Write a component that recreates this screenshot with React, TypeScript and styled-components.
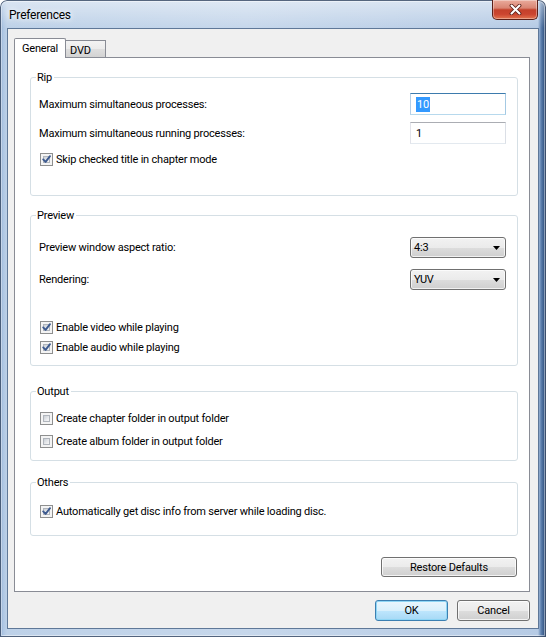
import * as React from 'react';
import styled, { createGlobalStyle, css } from 'styled-components';

const FONT = `Roboto, "Liberation Sans", sans-serif`;

const GlobalStyle = createGlobalStyle`
  html, body {
    margin: 0;
    padding: 0;
    background: #fff;
  }
  body {
    font-family: ${FONT};
    font-size: 11px;
    letter-spacing: -0.2px;
    color: #000;
  }
  * {
    box-sizing: border-box;
  }
`;

const SWindow = styled.div`
  width: 546px;
  height: 637px;
  display: flex;
  flex-direction: column;
  padding: 0 7px 8px 7px;
  border-radius: 7px 7px 0 0;
  overflow: hidden;
  background:
    linear-gradient(180deg, rgba(255, 255, 255, 0.45) 0px, rgba(255, 255, 255, 0) 28px),
    linear-gradient(90deg, #7fa3d0 0px, #aec6e3 3px, #bdd1e8 7px, #c6d7eb 45%, #b6cbe5 calc(100% - 8px), #5f82b0 calc(100% - 5px), #1e3e6c 100%);
  box-shadow: inset 0 0 0 1px rgba(35, 55, 85, 0.75), inset 0 0 0 2px rgba(255, 255, 255, 0.45);
`;

const TitleBar = styled.div`
  height: 28px;
  flex: none;
  display: flex;
  align-items: flex-start;
  justify-content: space-between;
`;

const Title = styled.span`
  margin: 8px 0 0 2px;
  font: 12px/15px ${FONT};
  color: #000;
  text-shadow: 0 0 5px #fff, 0 0 8px rgba(255, 255, 255, 0.9);
`;

const CloseButton = styled.div`
  width: 46px;
  height: 20px;
  margin-right: 1px;
  border: 1px solid #5b2019;
  border-top: none;
  border-radius: 0 0 5px 5px;
  display: flex;
  align-items: center;
  justify-content: center;
  background: linear-gradient(180deg, #eaab9c 0%, #d98573 42%, #c4412b 52%, #cb4530 75%, #e2744f 100%);
  box-shadow: inset 0 0 0 1px rgba(255, 255, 255, 0.35);
`;

const Client = styled.div`
  flex: 1;
  display: flex;
  flex-direction: column;
  background: #f0f0f0;
  border: 1px solid #5f7898;
  padding: 9px 8px 7px 6px;
`;

const TabStrip = styled.div`
  display: flex;
  align-items: flex-end;
  height: 20px;
  margin-bottom: -1px;
  position: relative;
  z-index: 1;
`;

const Tab = styled.div<{ $active?: boolean }>`
  font: 11px/14px ${FONT};
  border: 1px solid #898c95;
  border-bottom: none;
  ${({ $active }) =>
    $active
      ? css`
          position: relative;
          z-index: 2;
          height: 20px;
          padding: 3px 7px 0 7px;
          background: #fff;
          border-radius: 2px 2px 0 0;
        `
      : css`
          height: 17px;
          margin: 0 0 1px -1px;
          padding: 3px 14px 0 4px;
          background: linear-gradient(180deg, #f3f3f3 0%, #ebebeb 50%, #dedede 51%, #d3d3d3 100%);
        `}
`;

const Panel = styled.div`
  height: 535px;
  flex: none;
  background: #fff;
  border: 1px solid #898c95;
  padding: 12px 11px 0 15px;
  display: flex;
  flex-direction: column;
`;

const Group = styled.fieldset<{ $height: number; $top: number }>`
  margin: ${({ $top }) => $top}px 0 0 0;
  height: ${({ $height }) => $height}px;
  padding: 0;
  border: 1px solid #d5dfe5;
  border-radius: 3px;
  min-inline-size: 0;
`;

const Legend = styled.legend`
  margin-left: 5px;
  padding: 0 2px 0 1px;
  font: 11px/15px ${FONT};
  color: #000;
`;

const GroupBody = styled.div<{ $padTop: number }>`
  display: flex;
  flex-direction: column;
  padding: ${({ $padTop }) => $padTop}px 11px 0 8px;
`;

const FieldRow = styled.div<{ $height: number; $top?: number }>`
  display: flex;
  align-items: center;
  justify-content: space-between;
  height: ${({ $height }) => $height}px;
  margin-top: ${({ $top }) => $top ?? 0}px;
  font: 11px/15px ${FONT};
`;

const TextBox = styled.div<{ $focused?: boolean }>`
  width: 96px;
  height: 22px;
  display: flex;
  align-items: center;
  padding-left: 5px;
  background: #fff;
  border: 1px solid;
  border-color: ${({ $focused }) =>
    $focused ? '#3d7bad #a4c9e3 #b7d9ed #b5cfe7' : '#abadb3 #dbdfe6 #e3e9ef #e2e3ea'};
  font: 11px/15px ${FONT};
`;

const Selected = styled.span`
  background: #3399ff;
  color: #fff;
  padding: 0 1px;
`;

const DropDown = styled.div`
  width: 96px;
  height: 21px;
  display: flex;
  align-items: center;
  justify-content: space-between;
  padding: 0 5px 0 3px;
  border: 1px solid #707070;
  border-radius: 3px;
  background: linear-gradient(180deg, #f2f2f2 0%, #ebebeb 50%, #dddddd 51%, #cfcfcf 100%);
  box-shadow: inset 0 0 0 1px rgba(255, 255, 255, 0.7);
  font: 11px/15px ${FONT};
`;

const CheckRow = styled.label<{ $top?: number }>`
  display: flex;
  align-items: center;
  gap: 3px;
  height: 15px;
  margin-top: ${({ $top }) => $top ?? 0}px;
  padding-left: 1px;
  font: 11px/15px ${FONT};
`;

const CheckBox = styled.span`
  width: 13px;
  height: 13px;
  flex: none;
  display: grid;
  padding: 2px;
  border: 1px solid #8e8f8f;
  background: #f4f4f4;
  & > * {
    grid-area: 1 / 1;
  }
`;

const CheckInner = styled.span`
  border: 1px solid #b0b5bc;
  background: linear-gradient(135deg, #c9ced4 0%, #e6e8eb 55%, #f7f7f7 100%);
`;

const CheckMark = styled.svg`
  margin: -2px;
  width: 11px;
  height: 11px;
`;

const RestoreRow = styled.div`
  display: flex;
  justify-content: flex-end;
  margin: 21px 1px 0 0;
`;

const Button = styled.div<{ $width: number; $height: number; $default?: boolean }>`
  width: ${({ $width }) => $width}px;
  height: ${({ $height }) => $height}px;
  display: flex;
  align-items: center;
  justify-content: center;
  border-radius: 3px;
  font: 11px/15px ${FONT};
  color: #000;
  ${({ $default }) =>
    $default
      ? css`
          border: 1px solid #3c7fb1;
          background: linear-gradient(180deg, #eaf6fd 0%, #d9f0fc 50%, #bee6fd 51%, #a7d9f5 100%);
          box-shadow: inset 0 0 0 1px #8fd6f5;
        `
      : css`
          border: 1px solid #707070;
          background: linear-gradient(180deg, #f2f2f2 0%, #ebebeb 50%, #dddddd 51%, #cfcfcf 100%);
          box-shadow: inset 0 0 0 1px rgba(255, 255, 255, 0.75);
        `}
`;

const ButtonRow = styled.div`
  display: flex;
  justify-content: flex-end;
  gap: 9px;
  margin-top: 8px;
`;

const Check = ({ checked, label, top }: { checked?: boolean; label: string; top?: number }) => (
  <CheckRow $top={top}>
    <CheckBox>
      <CheckInner />
      {checked && (
        <CheckMark viewBox="0 0 11 11">
          <path d="M2.2 5.4 L4.6 7.9 L9 2.2" fill="none" stroke="#3d5a8f" strokeWidth="1.9" strokeLinecap="round" strokeLinejoin="round" />
        </CheckMark>
      )}
    </CheckBox>
    <span>{label}</span>
  </CheckRow>
);

const Arrow = () => (
  <svg width="7" height="4" viewBox="0 0 7 4">
    <path d="M0 0 H7 L3.5 4 Z" fill="#000" />
  </svg>
);

const App = () => (
  <>
    <GlobalStyle />
    <SWindow>
      <TitleBar>
        <Title>Preferences</Title>
        <CloseButton>
          <svg width="13" height="11" viewBox="0 0 13 11">
            <path d="M2.5 1.5 L10.5 9.5 M10.5 1.5 L2.5 9.5" stroke="#5a1f18" strokeWidth="3.8" strokeLinecap="round" />
            <path d="M2.5 1.5 L10.5 9.5 M10.5 1.5 L2.5 9.5" stroke="#fff" strokeWidth="2.1" strokeLinecap="round" />
          </svg>
        </CloseButton>
      </TitleBar>
      <Client>
        <TabStrip>
          <Tab $active>General</Tab>
          <Tab>DVD</Tab>
        </TabStrip>
        <Panel>
          <Group $top={0} $height={126}>
            <Legend>Rip</Legend>
            <GroupBody $padTop={8}>
              <FieldRow $height={22}>
                <span>Maximum simultaneous processes:</span>
                <TextBox $focused>
                  <Selected>10</Selected>
                </TextBox>
              </FieldRow>
              <FieldRow $height={22} $top={7}>
                <span>Maximum simultaneous running processes:</span>
                <TextBox>1</TextBox>
              </FieldRow>
              <Check checked top={8} label="Skip checked title in chapter mode" />
            </GroupBody>
          </Group>

          <Group $top={12} $height={158}>
            <Legend>Preview</Legend>
            <GroupBody $padTop={14}>
              <FieldRow $height={21}>
                <span>Preview window aspect ratio:</span>
                <DropDown>
                  <span>4:3</span>
                  <Arrow />
                </DropDown>
              </FieldRow>
              <FieldRow $height={21} $top={11}>
                <span>Rendering:</span>
                <DropDown>
                  <span>YUV</span>
                  <Arrow />
                </DropDown>
              </FieldRow>
              <Check checked top={30} label="Enable video while playing" />
              <Check checked top={5} label="Enable audio while playing" />
            </GroupBody>
          </Group>

          <Group $top={18} $height={77}>
            <Legend>Output</Legend>
            <GroupBody $padTop={12}>
              <Check label="Create chapter folder in output folder" />
              <Check top={8} label="Create album folder in output folder" />
            </GroupBody>
          </Group>

          <Group $top={14} $height={61}>
            <Legend>Others</Legend>
            <GroupBody $padTop={14}>
              <Check checked label="Automatically get disc info from server while loading disc." />
            </GroupBody>
          </Group>

          <RestoreRow>
            <Button $width={136} $height={20}>Restore Defaults</Button>
          </RestoreRow>
        </Panel>
        <ButtonRow>
          <Button $default $width={73} $height={21}>OK</Button>
          <Button $width={73} $height={21}>Cancel</Button>
        </ButtonRow>
      </Client>
    </SWindow>
  </>
);

export default App;
